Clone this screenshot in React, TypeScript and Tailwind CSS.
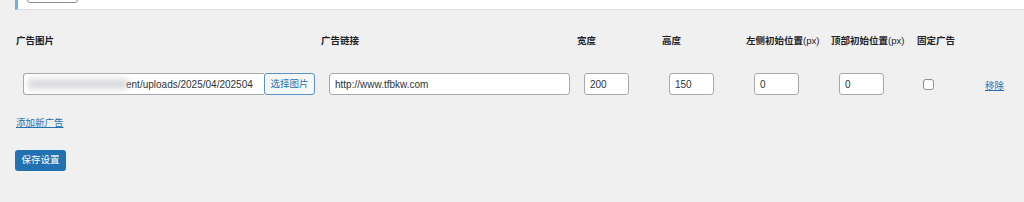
import React from "react";

const font = {
  fontFamily: '"Liberation Sans", "Noto Sans CJK SC", sans-serif',
};

function TextBox({ value, width }: { value: string; width: string }) {
  return (
    <div
      className={`${width} h-[22px] bg-white border border-[#a7aaad] rounded-[3px] flex items-center px-[5px] text-[10px] text-[#2c3338] overflow-hidden whitespace-nowrap`}
    >
      {value}
    </div>
  );
}

export default function App() {
  return (
    <div className="w-[1024px] h-[202px] bg-[#f0f0f1] overflow-hidden" style={font}>
      {/* notice box remnant at the top */}
      <div className="ml-[15px] h-[10px] bg-white border-l-[3px] border-l-[#72aee6] border-b border-b-[#dcdcde] overflow-hidden">
        <div className="ml-[9px] -mt-[10px] w-[51px] h-[13px] border border-[#8c8f94] rounded-[3px]" />
      </div>

      <div className="ml-[16px]">
        {/* headers */}
        <div className="grid grid-cols-[305px_256px_85px_84px_85px_86px_68px_1fr] mt-[24px] text-[9.5px] leading-[14px] font-bold text-[#1d2327]">
          <div>广告图片</div>
          <div>广告链接</div>
          <div>宽度</div>
          <div>高度</div>
          <div>
            左侧初始位置<span className="font-normal">(px)</span>
          </div>
          <div>
            顶部初始位置<span className="font-normal">(px)</span>
          </div>
          <div>固定广告</div>
          <div />
        </div>

        {/* ad row */}
        <div className="grid grid-cols-[305px_256px_85px_84px_85px_86px_68px_1fr] mt-[24px] items-center">
          <div className="pl-[7px] flex items-center">
            <div className="w-[241px] h-[22px] bg-white border border-[#a7aaad] border-r-0 rounded-l-[3px] flex items-center overflow-hidden whitespace-nowrap text-[10px] text-[#2c3338]">
              <span className="ml-[4px] w-[100px] h-[10px] shrink-0 bg-[#c9cacc] blur-[3px] opacity-70" />
              <span className="-ml-[2px]">ent/uploads/2025/04/202504</span>
            </div>
            <div className="w-[51px] h-[22px] border border-[#5a94c7] rounded-[3px] bg-[#f6f7f7] text-[#2271b1] text-[9.5px] flex items-center justify-center">
              选择图片
            </div>
          </div>
          <div className="pl-[8px]">
            <TextBox value="http://www.tfbkw.com" width="w-[241px]" />
          </div>
          <div className="pl-[7px]">
            <TextBox value="200" width="w-[45px]" />
          </div>
          <div className="pl-[7px]">
            <TextBox value="150" width="w-[45px]" />
          </div>
          <div className="pl-[8px]">
            <TextBox value="0" width="w-[45px]" />
          </div>
          <div className="pl-[8px]">
            <TextBox value="0" width="w-[45px]" />
          </div>
          <div className="pl-[6px]">
            <div className="w-[11px] h-[11px] bg-white border border-[#8c8f94] rounded-[3px]" />
          </div>
          <div>
            <span className="text-[9.5px] text-[#2271b1] underline">移除</span>
          </div>
        </div>

        <div className="mt-[20px] text-[9.5px] leading-[14px] text-[#2271b1] underline">添加新广告</div>

        <div className="-ml-[1px] mt-[20px] w-[51px] h-[21px] bg-[#2271b1] rounded-[3px] text-white text-[9.5px] flex items-center justify-center">
          保存设置
        </div>
      </div>
    </div>
  );
}
